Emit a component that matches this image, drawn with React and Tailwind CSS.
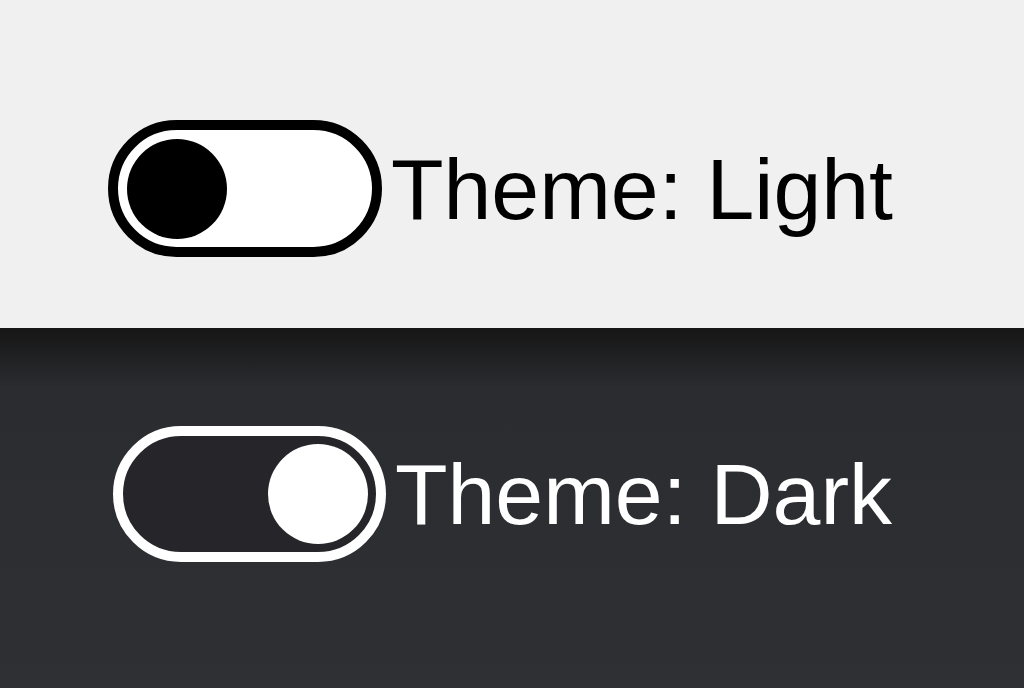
export default function App() {
  return (
    <div className="w-[1024px] h-[688px] flex flex-col font-['Liberation_Sans',Arial,sans-serif]">
      {/* Light theme */}
      <div className="h-[328px] bg-[#f0f0f0] pt-[120px] pl-[108px]">
        <div className="flex items-center">
          <div className="w-[274px] h-[137px] rounded-full border-[10px] border-black bg-white flex items-center pl-[9px]">
            <div className="w-[100px] h-[100px] rounded-full bg-black" />
          </div>
          <span className="ml-[9px] text-[86px] leading-none text-black">Theme: Light</span>
        </div>
      </div>

      {/* Dark theme */}
      <div className="flex-1 bg-[linear-gradient(to_bottom,#161616_0px,#2b2c30_60px,#2f3033_100%)] pt-[98px] pl-[113px]">
        <div className="flex items-center">
          <div className="w-[273px] h-[136px] rounded-full border-[10px] border-white bg-[#26262a] flex items-center justify-end pr-[8px]">
            <div className="w-[100px] h-[100px] rounded-full bg-white" />
          </div>
          <span className="ml-[9px] text-[86px] leading-none text-white">Theme: Dark</span>
        </div>
      </div>
    </div>
  )
}
